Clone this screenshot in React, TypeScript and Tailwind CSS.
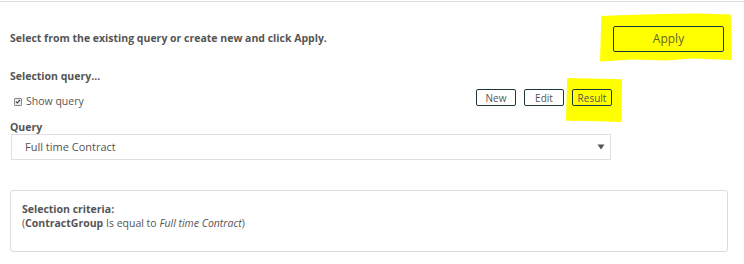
import React from 'react';

// Query selection panel with the yellow review highlights drawn over it.
const font = { fontFamily: '"Open Sans", "Liberation Sans", sans-serif' };

function Blob({ className, points }: { className: string; points: string }) {
  return (
    <svg className={`absolute pointer-events-none ${className}`} viewBox="0 0 100 100" preserveAspectRatio="none">
      <polygon points={points} fill="#ffff00" />
    </svg>
  );
}

function SmallButton({ label, highlight }: { label: string; highlight?: boolean }) {
  return (
    <button
      className={`relative h-[17px] w-[40px] rounded-[2px] border border-[#1d3838] text-[10px] leading-none text-[#555] ${
        highlight ? 'bg-[#ffff00]' : 'bg-white'
      }`}
    >
      {label}
    </button>
  );
}

export default function App() {
  return (
    <div className="relative w-[744px] h-[264px] bg-white overflow-hidden" style={font}>
      <Blob className="left-[600px] top-[13px] w-[132px] h-[49px]" points="1,6 20,4 45,2 75,1 99,3 100,96 70,93 50,97 25,95 0,99" />
      <Blob className="left-[566px] top-[78px] w-[56px] h-[44px]" points="2,0 100,3 99,100 40,98 0,97" />

      <div className="relative mt-px border-t border-[#dedede] pl-[10px]">
        <div className="flex items-center justify-between pr-[20px] pt-[24px]">
          <p className="text-[10.5px] font-bold text-[#555]">Select from the existing query or create new and click Apply.</p>
          <button className="h-[26px] w-[111px] rounded-[2px] border border-[#1d3838] bg-[#ffff00] text-[12px] text-[#66662e]">
            Apply
          </button>
        </div>

        <p className="mt-[17px] text-[10.5px] font-bold text-[#555] leading-[14px]">Selection query...</p>

        <div className="mt-[3px] flex w-[602px] items-center justify-between">
          <label className="flex items-center gap-[4px] pl-[4px] pt-[8px] text-[10.5px] text-[#555]">
            <span className="flex h-[8px] w-[8px] items-center justify-center rounded-[1px] border border-[#888] bg-[#eee]">
              <svg viewBox="0 0 8 8" className="h-[7px] w-[7px]">
                <path d="M1.3 4.2 L3.1 6 L6.7 1.8" stroke="#333" strokeWidth="1.4" fill="none" />
              </svg>
            </span>
            Show query
          </label>
          <div className="flex gap-[8px]">
            <SmallButton label="New" />
            <SmallButton label="Edit" />
            <SmallButton label="Result" highlight />
          </div>
        </div>

        <p className="mt-[10px] text-[10.5px] font-bold text-[#555] leading-[14px]">Query</p>
        <div className="ml-px flex h-[26px] w-[600px] items-center justify-between border border-[#e0e0e0] pl-[13px] pr-[5px]">
          <span className="text-[11px] text-[#555]">Full time Contract</span>
          <svg viewBox="0 0 8 8" className="h-[8px] w-[8px]">
            <path d="M0.5 1.5 H7.5 L4 6.5 Z" fill="#555" />
          </svg>
        </div>

        <div className="mt-[30px] h-[62px] w-[718px] rounded-[3px] border border-[#dcdcdc] pl-[11px] pt-[11px] text-[10.5px] leading-[14px] text-[#555]">
          <p className="font-bold">Selection criteria:</p>
          <p>
            (<span className="font-bold">ContractGroup</span> Is equal to <span className="italic">Full time Contract</span>)
          </p>
        </div>
      </div>
    </div>
  );
}
